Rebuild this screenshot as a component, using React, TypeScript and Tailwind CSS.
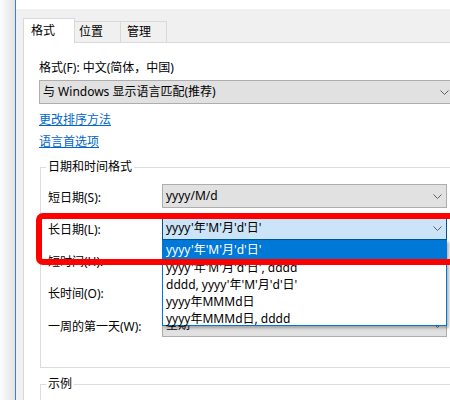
import React from "react";

const Chevron = () => (
  <svg width="9" height="5" viewBox="0 0 9 5" className="shrink-0">
    <path d="M0.5 0.5 L4.5 4.5 L8.5 0.5" fill="none" stroke="#5f5f5f" strokeWidth="1" />
  </svg>
);

function Combo({ value, focused }: { value: string; focused?: boolean }) {
  return (
    <div
      className={
        focused
          ? "w-[285px] h-[24px] shrink-0 flex items-center justify-between pl-[3px] pr-[4px] border border-[#005499] bg-[#cce4f7]"
          : "w-[285px] h-[24px] shrink-0 flex items-center justify-between pl-[3px] pr-[4px] border border-[#adadad] bg-[#e1e1e1]"
      }
    >
      <span className="whitespace-nowrap">{value}</span>
      <Chevron />
    </div>
  );
}

function Row({ label, value, focused }: { label: string; value: string; focused?: boolean }) {
  return (
    <div className="flex items-center h-[24px]">
      <div className="w-[114px] shrink-0 pt-[3px] whitespace-nowrap">{label}</div>
      <Combo value={value} focused={focused} />
    </div>
  );
}

export default function App() {
  const items = [
    "yyyy'年'M'月'd'日', dddd",
    "dddd, yyyy'年'M'月'd'日'",
    "yyyy年MMMd日",
    "yyyy年MMMd日, dddd",
  ];
  return (
    <div className="relative w-[450px] h-[400px] overflow-hidden flex bg-white text-[12px] leading-[16px] text-black font-['Noto_Sans','Noto_Sans_CJK_SC',sans-serif]">
      <div className="w-[15px] shrink-0 bg-gradient-to-r from-[#fdfdfd] to-[#e2e2e2]" />
      <div className="w-px shrink-0 bg-[#3a80d2]" />
      <div className="flex-1 min-w-0 flex flex-col bg-[#f0f0f0]">
        <div className="h-[9px] shrink-0 bg-white" />
        <div className="flex-1 flex flex-col pl-[7px]">
          {/* tabs */}
          <div className="h-[34px] shrink-0 flex items-end">
            <div className="h-[25px] w-[52px] shrink-0 bg-white border border-b-0 border-[#d9d9d9] pl-[7px] pt-[4px]">格式</div>
            <div className="h-[22px] w-[46px] shrink-0 border-t border-r border-b border-[#d9d9d9] pl-[4px] pt-[2px]">位置</div>
            <div className="h-[22px] w-[46px] shrink-0 border-t border-r border-b border-[#d9d9d9] pl-[6px] pt-[2px]">管理</div>
            <div className="flex-1 h-px bg-[#d9d9d9]" />
          </div>
          {/* panel */}
          <div className="flex-1 bg-white border-l border-[#d9d9d9] pl-[15px] pt-[17px] flex flex-col">
            <div className="whitespace-nowrap">格式(F): 中文(简体，中国)</div>
            <div className="mt-[4px] w-[415px] h-[24px] shrink-0 flex items-center justify-between pl-[3px] pr-[4px] border border-[#adadad] bg-[#e1e1e1]">
              <span className="whitespace-nowrap">与 Windows 显示语言匹配(推荐)</span>
              <Chevron />
            </div>
            <div className="mt-[8px] text-[#0066cc] underline w-fit">更改排序方法</div>
            <div className="mt-[6px] text-[#0066cc] underline w-fit">语言首选项</div>

            <div className="mt-[17px] ml-px w-[430px] h-[201px] shrink-0 border border-r-0 border-[#dcdcdc] pl-[7px] flex flex-col">
              <div className="-mt-[9px] -ml-[2px] px-[2px] bg-white w-fit">日期和时间格式</div>
              <div className="mt-[9px] flex flex-col gap-[8px]">
                <Row label="短日期(S):" value="yyyy/M/d" />
                <Row label="长日期(L):" value="yyyy'年'M'月'd'日'" focused />
                <Row label="短时间(H):" value="H:mm" />
                <Row label="长时间(O):" value="H:mm:ss" />
                <div className="mt-[1px]">
                  <Row label="一周的第一天(W):" value="星期一" />
                </div>
              </div>
            </div>

            <div className="mt-[16px] ml-px w-[430px] h-[60px] shrink-0 border border-r-0 border-[#dcdcdc] pl-[7px]">
              <div className="-mt-[9px] -ml-[2px] px-[2px] bg-white w-fit">示例</div>
            </div>
          </div>
        </div>
      </div>

      {/* open dropdown list */}
      <div className="absolute left-[162px] top-[240px] w-[285px] h-[86px] z-10 bg-white border border-[#0078d7] shadow-[2px_2px_3px_rgba(0,0,0,0.3)] flex flex-col">
        <div className="h-[18px] shrink-0 bg-[#0078d7] text-white pl-[3px] flex items-center whitespace-nowrap">yyyy'年'M'月'd'日'</div>
        {items.map((t) => (
          <div key={t} className="h-[17px] shrink-0 pl-[3px] flex items-center whitespace-nowrap">
            {t}
          </div>
        ))}
      </div>

      {/* red annotation */}
      <div className="absolute left-[36px] top-[213px] w-[430px] h-[52px] z-20 border-[6px] border-[#ff0000] rounded-[7px]" />
    </div>
  );
}
